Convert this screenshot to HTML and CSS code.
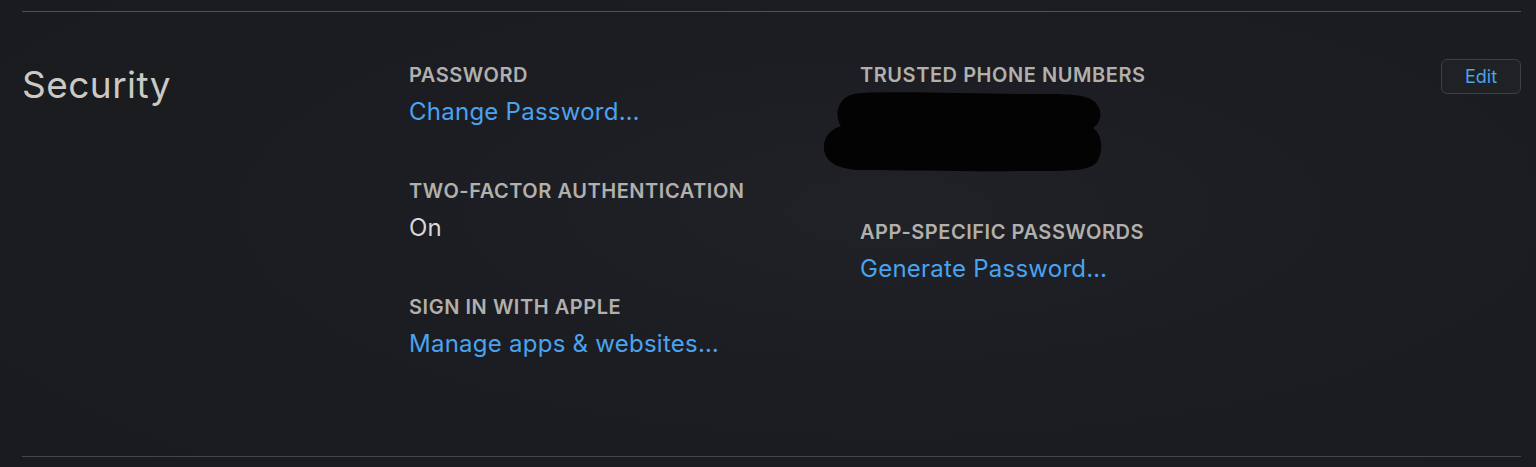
FILE: index.html
```html
<!DOCTYPE html>
<html lang="en">
<head>
<meta charset="utf-8">
<title>Security</title>
<link rel="stylesheet" href="styles.css">
</head>
<body>
<div class="page">
  <div class="rule rule-top"></div>
  <section class="security">
    <h2 class="title">Security</h2>
    <div class="col col-mid">
      <div class="item">
        <div class="label">PASSWORD</div>
        <a class="value link" href="#">Change Password…</a>
      </div>
      <div class="item">
        <div class="label">TWO-FACTOR AUTHENTICATION</div>
        <div class="value">On</div>
      </div>
      <div class="item">
        <div class="label">SIGN IN WITH APPLE</div>
        <a class="value link" href="#">Manage apps &amp; websites…</a>
      </div>
    </div>
    <div class="col col-right">
      <div class="item">
        <div class="label">TRUSTED PHONE NUMBERS</div>
        <svg class="redact" viewBox="0 0 280 80" width="280" height="80" aria-hidden="true">
          <path d="M40 1 C80 -1 150 2 200 2 C240 2 262 1 272 10 C280 18 279 30 270 36 C279 42 281 58 274 70 C266 80 240 79 200 79 C150 80 90 78 40 78 C15 78 2 70 1 57 C0 45 8 37 18 34 C12 26 14 12 22 6 C28 2 34 1 40 1 Z" fill="#030303"/>
        </svg>
      </div>
      <div class="item">
        <div class="label">APP-SPECIFIC PASSWORDS</div>
        <a class="value link" href="#">Generate Password…</a>
      </div>
    </div>
    <button class="edit" type="button">Edit</button>
  </section>
  <div class="rule rule-bottom"></div>
</div>
</body>
</html>
```
FILE: styles.css
```css
* { box-sizing: border-box; }
html, body {
  margin: 0;
  padding: 0;
  height: 100%;
}
body {
  background: radial-gradient(ellipse 70% 80% at 58% 45%, #202228 0%, #1c1d22 45%, #1a1b1e 100%);
  font-family: Inter, "Liberation Sans", Arial, sans-serif;
  color: #d6d6d6;
  overflow: hidden;
}
.page {
  padding: 11px 15px 0 22px;
}
.rule {
  height: 1px;
  background: #505156;
}
.rule-bottom {
  background: #45464b;
}
.security {
  display: flex;
  align-items: flex-start;
  padding: 48px 0 97px 0;
}
.title {
  width: 387px;
  flex: none;
  margin: 3px 0 0 0;
  font-size: 37px;
  line-height: 44px;
  font-weight: 400;
  color: #cbc9c4;
  letter-spacing: 0.45px;
}
.col {
  display: flex;
  flex-direction: column;
  padding-top: 3px;
}
.col-mid {
  width: 451px;
  flex: none;
  gap: 52px;
}
.col-right {
  flex: 1;
}
.item {
  display: flex;
  flex-direction: column;
  align-items: flex-start;
}
.label {
  font-size: 20px;
  line-height: 24px;
  font-weight: 600;
  color: #b2b0ac;
  margin-bottom: 10px;
  letter-spacing: 0.55px;
}
.value {
  font-size: 24px;
  line-height: 30px;
  color: #d8d8d8;
  text-decoration: none;
  letter-spacing: 0.25px;
}
.link {
  color: #4aa3ef;
}
.redact {
  display: block;
  margin: 5px 0 48px -37px;
}
.col-right .item:first-child .label {
  margin-bottom: 0;
}
.edit {
  flex: none;
  margin-top: -1px;
  width: 80px;
  height: 35px;
  border: 1px solid #3c3f44;
  border-radius: 6px;
  background: #1f2125;
  color: #4aa3ef;
  font-family: Inter, "Liberation Sans", Arial, sans-serif;
  font-size: 18px;
  padding: 0;
}
```
